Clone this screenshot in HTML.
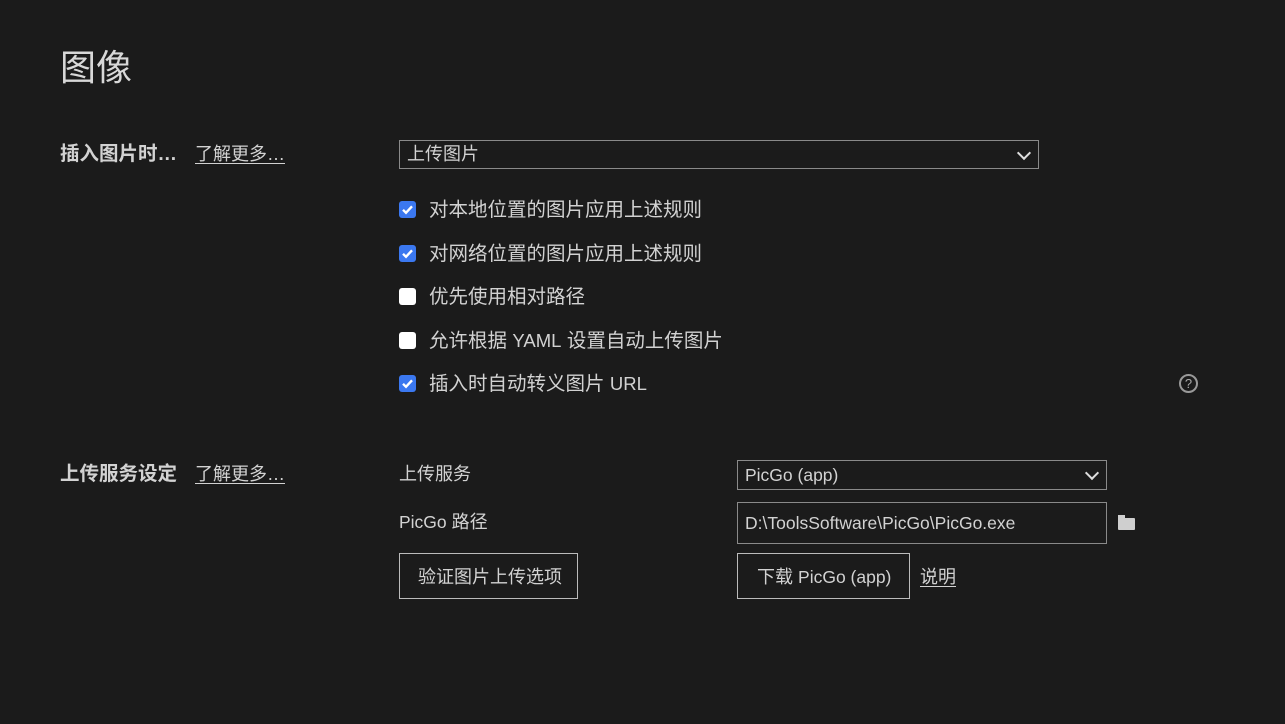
<!DOCTYPE html><html><head><meta charset="utf-8"><style>
body{margin:0;width:1285px;height:724px;background:#1b1b1b;color:#d2d2d2;font-family:"Liberation Sans","Noto Sans CJK SC",sans-serif;font-size:19.5px;line-height:20px;position:relative;overflow:hidden}
.a{position:absolute;white-space:nowrap}
.l{font-size:17.5px}
.s{font-size:18px}
.box{position:absolute;border:1px solid #8a8a8a;box-sizing:border-box}
.cb{position:absolute;width:17px;height:17px;border-radius:3px;box-sizing:border-box}
.on{background:#3b78f0}
.off{background:#fff}
u{text-decoration:underline;text-underline-offset:3px}
.chev{position:absolute;width:8px;height:8px;border-right:2px solid #ddd;border-bottom:2px solid #ddd;transform:rotate(45deg)}
</style></head><body>
<div class="a" style="left:60px;top:48px;font-size:36px;line-height:40px;color:#d8d8d8">图像</div>
<div class="a" style="left:60px;top:144px;font-weight:bold">插入图片时…</div>
<div class="a s" style="left:195px;top:144px"><u>了解更多…</u></div>
<div class="box" style="left:399px;top:140px;width:640px;height:29px"></div>
<div class="a s" style="left:407px;top:144px">上传图片</div>
<div class="chev" style="left:1019px;top:148px"></div>

<svg width="0" height="0" style="position:absolute"><defs><symbol id="ck" viewBox="0 0 17 17"><path d="M4 8.8l3 3 6-6.5" fill="none" stroke="#fff" stroke-width="2.4"/></symbol></defs></svg>
<div class="cb on" style="left:399px;top:201px"><svg width="17" height="17"><use href="#ck"/></svg></div>
<div class="a" style="left:429px;top:200px">对本地位置的图片应用上述规则</div>
<div class="cb on" style="left:399px;top:245px"><svg width="17" height="17"><use href="#ck"/></svg></div>
<div class="a" style="left:429px;top:244px">对网络位置的图片应用上述规则</div>
<div class="cb off" style="left:399px;top:288px"></div>
<div class="a" style="left:429px;top:287px">优先使用相对路径</div>
<div class="cb off" style="left:399px;top:332px"></div>
<div class="a" style="left:429px;top:331px">允许根据 <span style="font-size:18.5px">YAML</span> 设置自动上传图片</div>
<div class="cb on" style="left:399px;top:375px"><svg width="17" height="17"><use href="#ck"/></svg></div>
<div class="a" style="left:429px;top:374px">插入时自动转义图片 <span style="font-size:18.5px">URL</span></div>
<div class="a" style="left:1179px;top:374px;width:15px;height:15px;border:2px solid #999;border-radius:50%;font-size:13px;line-height:15px;text-align:center;color:#aaa">?</div>

<div class="a" style="left:60px;top:464px;font-weight:bold">上传服务设定</div>
<div class="a s" style="left:195px;top:464px"><u>了解更多…</u></div>
<div class="a s" style="left:399px;top:464px">上传服务</div>
<div class="box" style="left:737px;top:460px;width:370px;height:30px"></div>
<div class="a l" style="left:745px;top:465px">PicGo (app)</div>
<div class="chev" style="left:1087px;top:468px"></div>
<div class="a s" style="left:399px;top:512px"><span class="l">PicGo</span> 路径</div>
<div class="box" style="left:737px;top:502px;width:370px;height:42px"></div>
<div class="a l" style="left:745px;top:513px">D:\ToolsSoftware\PicGo\PicGo.exe</div>
<div class="a" style="left:1118px;top:518px;width:17px;height:12px;background:#cfcfcf;border-radius:1px"></div>
<div class="a" style="left:1118px;top:515px;width:7px;height:4px;background:#cfcfcf"></div>
<div class="box" style="left:399px;top:553px;width:179px;height:46px;border-color:#bbb"></div>
<div class="a s" style="left:418px;top:567px">验证图片上传选项</div>
<div class="box" style="left:737px;top:553px;width:173px;height:46px;border-color:#bbb"></div>
<div class="a s" style="left:757px;top:567px">下载 <span class="l">PicGo (app)</span></div>
<div class="a s" style="left:920px;top:567px"><u>说明</u></div>
</body></html>
